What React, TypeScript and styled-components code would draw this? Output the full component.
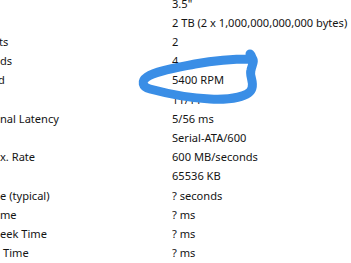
import * as React from 'react'
import styled, { createGlobalStyle } from 'styled-components'

const GlobalStyle = createGlobalStyle`
  html, body {
    margin: 0;
    padding: 0;
    background: #ffffff;
    overflow: hidden;
  }
`

const Page = styled.div`
  position: relative;
  width: 351px;
  height: 263px;
  overflow: hidden;
  background: #ffffff;
  font-family: 'Noto Sans', 'Open Sans', sans-serif;
  font-size: 11.1px;
  color: #141414;
`

const List = styled.div`
  display: flex;
  flex-direction: column;
  margin-top: -6.3px;
`

const Row = styled.div`
  display: grid;
  grid-template-columns: 172px 1fr;
  height: 19.2px;
  line-height: 19.2px;
  white-space: nowrap;
`

const Label = styled.div<{ $shift: number }>`
  overflow: hidden;
  padding-left: ${(p) => Math.max(p.$shift, 0)}px;
  text-indent: ${(p) => Math.min(p.$shift, 0)}px;
`

const Value = styled.div`
  overflow: hidden;
`

const Ink = styled.svg`
  position: absolute;
  left: 0;
  top: 0;
  pointer-events: none;
`

interface Prop {
  label: string
  shift: number
  value: string
}

// left column is scrolled out of view, only the tails of the labels show
const rows: Prop[] = [
  { label: '', shift: 0, value: '3.5"' },
  { label: '', shift: 0, value: '2 TB (2 x 1,000,000,000,000 bytes)' },
  { label: 'ts', shift: -1, value: '2' },
  { label: 'ds', shift: 0, value: '4' },
  { label: 'd', shift: -2, value: '5400 RPM' },
  { label: '', shift: 0, value: '11/11' },
  { label: 'nal Latency', shift: 0, value: '5/56 ms' },
  { label: '', shift: 0, value: 'Serial-ATA/600' },
  { label: 'x. Rate', shift: 0, value: '600 MB/seconds' },
  { label: '', shift: 0, value: '65536 KB' },
  { label: 'e (typical)', shift: 0, value: '? seconds' },
  { label: 'me', shift: 0, value: '? ms' },
  { label: 'eek Time', shift: 0, value: '? ms' },
  { label: 'Time', shift: 3, value: '? ms' },
]

function Scribble() {
  return (
    <Ink width="351" height="263" viewBox="0 0 351 263">
      <path
        d="M 250 54
           C 252 56, 253 58, 250 59
           C 235 59, 212 61, 195 64
           C 175 68, 156 71, 147 77
           C 141 81, 142 87, 150 89
           C 165 93, 185 98, 210 99
           C 230 100, 250 97, 252 88
           C 254 81, 249 76, 251 70
           C 252 65, 255 61, 252 58"
        fill="none"
        stroke="#3a8ee6"
        strokeWidth="9"
        strokeLinecap="round"
        strokeLinejoin="round"
      />
    </Ink>
  )
}

export default function App() {
  return (
    <Page>
      <GlobalStyle />
      <List>
        {rows.map((r, i) => (
          <Row key={i}>
            <Label $shift={r.shift}>{r.label}</Label>
            <Value>{r.value}</Value>
          </Row>
        ))}
      </List>
      <Scribble />
    </Page>
  )
}
